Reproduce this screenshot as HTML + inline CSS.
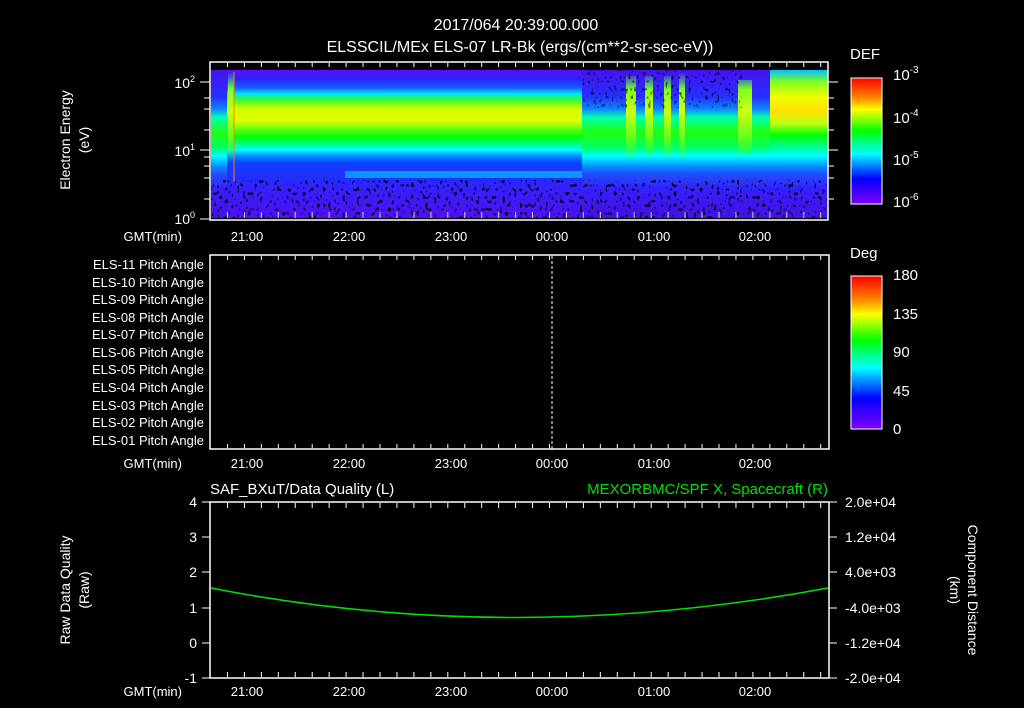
<!DOCTYPE html>
<html><head><meta charset="utf-8"><style>
html,body{margin:0;padding:0;background:#000;width:1024px;height:708px;overflow:hidden}
svg{display:block}
text{font-family:"Liberation Sans",sans-serif;fill:#fff}
</style></head><body>
<svg width="1024" height="708" viewBox="0 0 1024 708">
<defs>
<linearGradient id="gA" gradientUnits="userSpaceOnUse" x1="0" y1="70" x2="0" y2="218">
<stop offset="0" stop-color="#5a10ff"/><stop offset="0.06" stop-color="#2a20ff"/><stop offset="0.12" stop-color="#1060ff"/>
<stop offset="0.16" stop-color="#00e0ff"/><stop offset="0.20" stop-color="#30ff30"/><stop offset="0.26" stop-color="#d0ff00"/>
<stop offset="0.34" stop-color="#e0ff00"/><stop offset="0.40" stop-color="#60ff10"/><stop offset="0.45" stop-color="#00ff00"/>
<stop offset="0.50" stop-color="#00ff80"/><stop offset="0.54" stop-color="#00ffff"/><stop offset="0.58" stop-color="#0090ff"/>
<stop offset="0.63" stop-color="#1040ff"/><stop offset="0.72" stop-color="#2030ff"/>
<stop offset="0.80" stop-color="#3520ff"/><stop offset="1" stop-color="#5010f0"/></linearGradient>
<linearGradient id="gB" gradientUnits="userSpaceOnUse" x1="0" y1="70" x2="0" y2="218">
<stop offset="0" stop-color="#4512f0"/><stop offset="0.18" stop-color="#2530ff"/><stop offset="0.26" stop-color="#1080ff"/>
<stop offset="0.32" stop-color="#00ffb0"/><stop offset="0.42" stop-color="#20ff10"/><stop offset="0.52" stop-color="#00ff60"/>
<stop offset="0.58" stop-color="#00ffff"/><stop offset="0.64" stop-color="#00a0ff"/><stop offset="0.70" stop-color="#2050ff"/><stop offset="0.80" stop-color="#3520ff"/>
<stop offset="1" stop-color="#4510e0"/></linearGradient>
<linearGradient id="gC" gradientUnits="userSpaceOnUse" x1="0" y1="70" x2="0" y2="218">
<stop offset="0" stop-color="#00c0ff"/><stop offset="0.08" stop-color="#80ff20"/><stop offset="0.18" stop-color="#f0ff00"/>
<stop offset="0.28" stop-color="#ffe000"/><stop offset="0.36" stop-color="#c0ff10"/><stop offset="0.44" stop-color="#00ff00"/>
<stop offset="0.52" stop-color="#00ff90"/><stop offset="0.58" stop-color="#00ffff"/><stop offset="0.64" stop-color="#00a0ff"/><stop offset="0.70" stop-color="#2050ff"/>
<stop offset="0.80" stop-color="#3520ff"/><stop offset="1" stop-color="#4510e0"/></linearGradient>
<linearGradient id="gSpike" gradientUnits="userSpaceOnUse" x1="0" y1="72" x2="0" y2="160">
<stop offset="0" stop-color="#40ff40" stop-opacity="0"/><stop offset="0.2" stop-color="#80ff20"/><stop offset="0.45" stop-color="#d0ff10"/>
<stop offset="0.75" stop-color="#60ff20"/><stop offset="1" stop-color="#30ff30" stop-opacity="0"/></linearGradient>
<linearGradient id="gBar" x1="0" y1="0" x2="0" y2="1">
<stop offset="0" stop-color="#ff0000"/><stop offset="0.15" stop-color="#ff8000"/><stop offset="0.25" stop-color="#ffff00"/>
<stop offset="0.42" stop-color="#00ff00"/><stop offset="0.6" stop-color="#00ffff"/><stop offset="0.8" stop-color="#0000ff"/>
<stop offset="1" stop-color="#8000ff"/></linearGradient>
<filter id="spk" x="0" y="0" width="100%" height="100%">
<feTurbulence type="fractalNoise" baseFrequency="0.35 0.25" numOctaves="1" seed="3"/>
<feColorMatrix type="matrix" values="0 0 0 0 0  0 0 0 0 0  0 0 0 0 0  0 0 0 12 -7.3"/>
</filter>
<pattern id="tkH" x="210" y="0" width="16.95" height="10" patternUnits="userSpaceOnUse"><rect x="0" y="0" width="1" height="10" fill="#fff"/></pattern>
</defs>

<text x="516" y="30" font-size="16" text-anchor="middle">2017/064 20:39:00.000</text>
<text x="520" y="52" font-size="16" text-anchor="middle">ELSSCIL/MEx ELS-07 LR-Bk  (ergs/(cm**2-sr-sec-eV))</text>

<rect x="211" y="70" width="371" height="148" fill="url(#gA)"/>
<rect x="582" y="70" width="188" height="148" fill="url(#gB)"/>
<rect x="770" y="70" width="58" height="148" fill="url(#gC)"/>
<rect x="211" y="70" width="16" height="148" fill="url(#gB)"/>
<rect x="228" y="72" width="6" height="90" fill="url(#gSpike)"/>
<rect x="233" y="72" width="2" height="110" fill="#ff8000" opacity="0.5"/>
<rect x="345" y="171" width="237" height="7" fill="#00d8ff" opacity="0.6"/>
<rect x="626" y="76" width="10" height="84" fill="url(#gSpike)"/>
<rect x="645" y="76" width="8" height="84" fill="url(#gSpike)"/>
<rect x="664" y="76" width="7" height="84" fill="url(#gSpike)"/>
<rect x="679" y="72" width="6" height="88" fill="url(#gSpike)"/>
<rect x="738" y="80" width="14" height="76" fill="url(#gSpike)"/>
<rect x="211" y="180" width="617" height="38" filter="url(#spk)"/>
<rect x="582" y="70" width="160" height="38" filter="url(#spk)" opacity="0.6"/>
<rect x="210" y="62" width="618" height="158" fill="none" stroke="#fff" stroke-width="1.5"/>
<rect x="211" y="63" width="617" height="4" fill="url(#tkH)"/>
<rect x="211" y="212" width="617" height="6" fill="url(#tkH)" opacity="0.8"/>
<g stroke="#fff" stroke-width="1">
<line x1="200" y1="82" x2="210" y2="82"/><line x1="200" y1="150" x2="210" y2="150"/><line x1="200" y1="219" x2="210" y2="219"/>
<line x1="204" y1="98" x2="210" y2="98"/><line x1="204" y1="109" x2="210" y2="109"/><line x1="204" y1="130" x2="210" y2="130"/>
<line x1="204" y1="157" x2="210" y2="157"/><line x1="204" y1="166" x2="210" y2="166"/><line x1="204" y1="178" x2="210" y2="178"/><line x1="204" y1="199" x2="210" y2="199"/>
<line x1="828" y1="82" x2="838" y2="82"/><line x1="828" y1="150" x2="838" y2="150"/><line x1="828" y1="98" x2="834" y2="98"/><line x1="828" y1="109" x2="834" y2="109"/>
<line x1="828" y1="130" x2="834" y2="130"/><line x1="828" y1="166" x2="834" y2="166"/><line x1="828" y1="178" x2="834" y2="178"/><line x1="828" y1="199" x2="834" y2="199"/>
</g>
<text x="195" y="88" font-size="14" text-anchor="end">10<tspan font-size="9" dy="-6">2</tspan></text>
<text x="195" y="156" font-size="14" text-anchor="end">10<tspan font-size="9" dy="-6">1</tspan></text>
<text x="195" y="224" font-size="14" text-anchor="end">10<tspan font-size="9" dy="-6">0</tspan></text>
<text transform="translate(70,140) rotate(-90)" font-size="14" text-anchor="middle">Electron Energy</text>
<text transform="translate(89,140) rotate(-90)" font-size="14" text-anchor="middle">(eV)</text>
<g font-size="13" text-anchor="middle">
<text x="182" y="241" text-anchor="end">GMT(min)</text>
<text x="247" y="241">21:00</text><text x="349" y="241">22:00</text><text x="451" y="241">23:00</text>
<text x="552" y="241">00:00</text><text x="654" y="241">01:00</text><text x="755" y="241">02:00</text>
</g>
<text x="850" y="59" font-size="15">DEF</text>
<rect x="851" y="78" width="31" height="126" fill="url(#gBar)" stroke="#fff" stroke-width="1"/>
<text x="893" y="80" font-size="15">10<tspan font-size="10" dy="-7">-3</tspan></text>
<text x="893" y="123" font-size="15">10<tspan font-size="10" dy="-7">-4</tspan></text>
<text x="893" y="165" font-size="15">10<tspan font-size="10" dy="-7">-5</tspan></text>
<text x="893" y="207" font-size="15">10<tspan font-size="10" dy="-7">-6</tspan></text>

<rect x="210" y="255" width="619" height="194" fill="none" stroke="#fff" stroke-width="1.5"/>
<rect x="211" y="256" width="617" height="4" fill="url(#tkH)"/>
<rect x="211" y="444" width="617" height="4" fill="url(#tkH)"/>
<line x1="552" y1="256" x2="552" y2="449" stroke="#fff" stroke-dasharray="3,2"/>
<g font-size="13" text-anchor="end">
<text x="204" y="269">ELS-11 Pitch Angle</text><text x="204" y="287">ELS-10 Pitch Angle</text>
<text x="204" y="304">ELS-09 Pitch Angle</text><text x="204" y="322">ELS-08 Pitch Angle</text>
<text x="204" y="339">ELS-07 Pitch Angle</text><text x="204" y="357">ELS-06 Pitch Angle</text>
<text x="204" y="374">ELS-05 Pitch Angle</text><text x="204" y="392">ELS-04 Pitch Angle</text>
<text x="204" y="410">ELS-03 Pitch Angle</text><text x="204" y="427">ELS-02 Pitch Angle</text>
<text x="204" y="445">ELS-01 Pitch Angle</text>
</g>
<g font-size="13" text-anchor="middle">
<text x="182" y="468" text-anchor="end">GMT(min)</text>
<text x="247" y="468">21:00</text><text x="349" y="468">22:00</text><text x="451" y="468">23:00</text>
<text x="552" y="468">00:00</text><text x="654" y="468">01:00</text><text x="755" y="468">02:00</text>
</g>
<text x="850" y="258" font-size="15">Deg</text>
<rect x="851" y="276" width="31" height="153" fill="url(#gBar)" stroke="#fff" stroke-width="1"/>
<g font-size="15">
<text x="893" y="280">180</text><text x="893" y="319">135</text><text x="893" y="357">90</text>
<text x="893" y="396">45</text><text x="893" y="434">0</text>
</g>

<text x="210" y="494" font-size="15">SAF_BXuT/Data Quality (L)</text>
<text x="828" y="494" font-size="15" text-anchor="end" style="fill:#00e000">MEXORBMC/SPF X, Spacecraft (R)</text>
<rect x="210" y="502" width="619" height="176" fill="none" stroke="#fff" stroke-width="1.5"/>
<rect x="211" y="503" width="617" height="5" fill="url(#tkH)"/>
<rect x="211" y="672" width="617" height="5" fill="url(#tkH)"/>
<g stroke="#fff" stroke-width="1">
<line x1="202" y1="502" x2="210" y2="502"/><line x1="202" y1="537" x2="210" y2="537"/><line x1="202" y1="572" x2="210" y2="572"/>
<line x1="202" y1="608" x2="210" y2="608"/><line x1="202" y1="643" x2="210" y2="643"/><line x1="202" y1="678" x2="210" y2="678"/>
<line x1="829" y1="502" x2="837" y2="502"/><line x1="829" y1="537" x2="837" y2="537"/><line x1="829" y1="572" x2="837" y2="572"/>
<line x1="829" y1="608" x2="837" y2="608"/><line x1="829" y1="643" x2="837" y2="643"/><line x1="829" y1="678" x2="837" y2="678"/>
</g>
<g font-size="14" text-anchor="end">
<text x="197" y="507">4</text><text x="197" y="542">3</text><text x="197" y="577">2</text>
<text x="197" y="613">1</text><text x="197" y="648">0</text><text x="197" y="683">-1</text>
</g>
<g font-size="14">
<text x="845" y="507">2.0e+04</text><text x="845" y="542">1.2e+04</text><text x="845" y="577">4.0e+03</text>
<text x="845" y="613">-4.0e+03</text><text x="845" y="648">-1.2e+04</text><text x="845" y="683">-2.0e+04</text>
</g>
<path d="M211,588 Q512,647 828,588" fill="none" stroke="#00e000" stroke-width="1.5"/>
<text transform="translate(70,590) rotate(-90)" font-size="14" text-anchor="middle">Raw Data Quality</text>
<text transform="translate(89,590) rotate(-90)" font-size="14" text-anchor="middle">(Raw)</text>
<text transform="translate(968,590) rotate(90)" font-size="14" text-anchor="middle">Component Distance</text>
<text transform="translate(950,590) rotate(90)" font-size="14" text-anchor="middle">(km)</text>
<g font-size="13" text-anchor="middle">
<text x="182" y="696" text-anchor="end">GMT(min)</text>
<text x="247" y="696">21:00</text><text x="349" y="696">22:00</text><text x="451" y="696">23:00</text>
<text x="552" y="696">00:00</text><text x="654" y="696">01:00</text><text x="755" y="696">02:00</text>
</g>
</svg>
</body></html>
